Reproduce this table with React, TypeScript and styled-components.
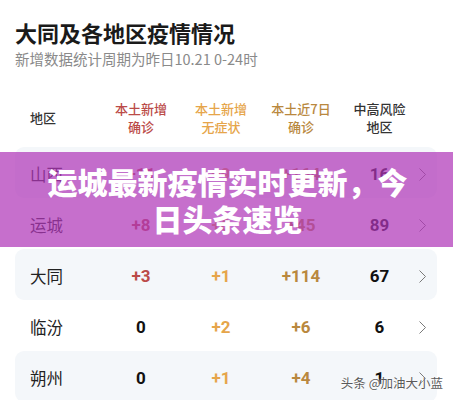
import React from 'react';
import styled, { createGlobalStyle } from 'styled-components';

const GlobalStyle = createGlobalStyle`
  html, body {
    margin: 0;
    padding: 0;
    background: #fff;
    font-family: 'Noto Sans CJK SC', 'Noto Sans', sans-serif;
    overflow: hidden;
  }
`;

const Page = styled.div`
  position: relative;
  width: 453px;
  height: 400px;
  overflow: hidden;
  background: #fff;
`;

const Header = styled.div`
  padding: 17px 15px 0;
`;

const Title = styled.div`
  font-size: 22px;
  line-height: 30px;
  font-weight: 700;
  color: #1a1a1a;
`;

const Subtitle = styled.div`
  margin-top: 2px;
  font-size: 14.5px;
  line-height: 20px;
  color: #8a8a8a;
`;

const Table = styled.div`
  position: relative;
  margin-top: 31px;
  padding: 0 16px 0 15px;
`;

const Grid = styled.div<{ $striped?: boolean }>`
  display: grid;
  grid-template-columns: 71px 80px 80px 80px 77px 1fr;
  align-items: center;
  padding-left: 15px;
  border-radius: 9px;
  background: ${(p) => (p.$striped ? '#f4f7fa' : 'transparent')};
`;

const HeadRow = styled(Grid)`
  height: 36px;
  margin-bottom: 11px;
`;

const Row = styled(Grid)`
  height: 51px;
  padding-top: 3px;
  box-sizing: border-box;
`;

const HeadCell = styled.div<{ $color: string; $align?: string }>`
  font-size: 13px;
  line-height: 18px;
  font-weight: 500;
  color: ${(p) => p.$color};
  text-align: ${(p) => p.$align || 'center'};
`;

const Name = styled.div`
  font-size: 16.5px;
  color: #222;
`;

const Value = styled.div<{ $color: string }>`
  font-family: Roboto, 'Noto Sans', sans-serif;
  font-size: 17px;
  font-weight: 700;
  color: ${(p) => p.$color};
  text-align: center;
`;

const Chevron = styled.svg`
  display: block;
  margin-left: 0;
`;

const Band = styled.div`
  position: absolute;
  left: 0;
  right: 0;
  top: 152px;
  height: 95px;
  display: flex;
  align-items: center;
  justify-content: center;
  padding: 0 40px 0 42px;
  background: rgba(176, 56, 184, 0.72);
`;

const BandText = styled.div`
  font-size: 30px;
  line-height: 37px;
  font-weight: 900;
  color: #fff;
  text-align: center;
`;

const Watermark = styled.div`
  position: absolute;
  right: 10px;
  bottom: 8px;
  font-size: 12.5px;
  color: #5a5a5a;
  text-shadow: 0 0 2px #fff, 0 0 2px #fff;
`;

const RED = '#bb4b48';
const ORANGE = '#e6a54a';
const GOLD = '#b9883e';
const DARK = '#111';

type RowData = { name: string; a: string; b: string; c: string; d: string };

const rows: RowData[] = [
  { name: '山西', a: '+11', b: '+9', c: '+164', d: '16' },
  { name: '运城', a: '+8', b: '+6', c: '+45', d: '89' },
  { name: '大同', a: '+3', b: '+1', c: '+114', d: '67' },
  { name: '临汾', a: '0', b: '+2', c: '+6', d: '6' },
  { name: '朔州', a: '0', b: '+1', c: '+4', d: '1' },
];

const valueColor = (v: string, c: string) => (v === '0' ? DARK : c);

const App: React.FC = () => {
  return (
    <Page>
      <GlobalStyle />
      <Header>
        <Title>大同及各地区疫情情况</Title>
        <Subtitle>新增数据统计周期为昨日10.21 0-24时</Subtitle>
      </Header>
      <Table>
        <HeadRow>
          <HeadCell $color="#333" $align="left">地区</HeadCell>
          <HeadCell $color={RED}>本土新增<br />确诊</HeadCell>
          <HeadCell $color={ORANGE}>本土新增<br />无症状</HeadCell>
          <HeadCell $color={GOLD}>本土近7日<br />确诊</HeadCell>
          <HeadCell $color="#333">中高风险<br />地区</HeadCell>
          <div />
        </HeadRow>
        {rows.map((r, i) => (
          <Row key={r.name} $striped={i % 2 === 0}>
            <Name>{r.name}</Name>
            <Value $color={valueColor(r.a, RED)}>{r.a}</Value>
            <Value $color={valueColor(r.b, ORANGE)}>{r.b}</Value>
            <Value $color={valueColor(r.c, GOLD)}>{r.c}</Value>
            <Value $color={DARK}>{r.d}</Value>
            <Chevron width="9" height="15" viewBox="0 0 9 15">
              <path d="M1.5 1.5 L7.5 7.5 L1.5 13.5" fill="none" stroke="#7a7a7a" strokeWidth="1" />
            </Chevron>
          </Row>
        ))}
      </Table>
      <Band>
        <BandText>运城最新疫情实时更新，今日头条速览</BandText>
      </Band>
      <Watermark>头条 @加油大小蓝</Watermark>
    </Page>
  );
};

export default App;
